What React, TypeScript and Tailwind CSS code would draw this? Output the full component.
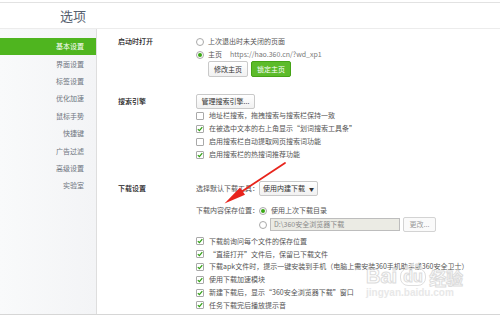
import React from "react";

const nav = ["基本设置", "界面设置", "标签设置", "优化加速", "鼠标手势", "快捷键", "广告过滤", "高级设置", "实验室"];

function Radio({ on }: { on?: boolean }) {
  return (
    <span className="w-[8px] h-[8px] rounded-full border border-[#a9a9a9] bg-white flex items-center justify-center shrink-0">
      {on && <span className="w-[4px] h-[4px] rounded-full bg-[#3aa815]" />}
    </span>
  );
}

function Check({ on }: { on?: boolean }) {
  return (
    <span className="w-[8px] h-[8px] rounded-[1px] border border-[#a9a9a9] bg-white flex items-center justify-center shrink-0">
      {on && (
        <svg width="6" height="6" viewBox="0 0 6 6">
          <path d="M0.8 3.1 L2.4 4.6 L5.3 1.2" stroke="#2f9e12" strokeWidth="1.2" fill="none" />
        </svg>
      )}
    </span>
  );
}

function CheckRow({ text, on = true, h = "h-[13px]" }: { text: string; on?: boolean; h?: string }) {
  return (
    <div className={`${h} flex items-center gap-[5px] whitespace-nowrap`}>
      <Check on={on} />
      <span>{text}</span>
    </div>
  );
}

function Btn({ children, w }: { children: React.ReactNode; w: string }) {
  return (
    <span className={`${w} h-full flex items-center justify-center whitespace-nowrap border border-[#c9c9c9] rounded-[2px] bg-gradient-to-b from-white to-[#f1f1f1] text-[#333]`}>
      {children}
    </span>
  );
}

export default function App() {
  return (
    <div
      className="w-[500px] h-[318px] bg-white relative overflow-hidden text-[7px] leading-none text-[#555]"
      style={{ fontFamily: '"Noto Sans CJK SC", "Noto Sans", sans-serif' }}
    >
      <div className="pt-[2px]">
        <div className="border-t border-[#e2e2e2] h-[27px] border-b border-b-[#ececec] flex items-center pl-[60px]">
          <span className="text-[13px] text-[#56606e]">选项</span>
        </div>
      </div>

      <div className="flex h-[286px] border-b border-[#d6d6d6]">
        {/* sidebar */}
        <div className="w-[97px] shrink-0 bg-gradient-to-r from-[#f9fafb] to-[#f3f4f6] border-r border-[#dedede] pt-[9px]">
          {nav.map((n, i) => (
            <div
              key={n}
              className={`h-[17.4px] flex items-center justify-end pr-[12px] ${
                i === 0 ? "bg-[#4fb51f] text-white" : "text-[#6e7580]"
              }`}
            >
              {n}
            </div>
          ))}
        </div>

        {/* content */}
        <div className="flex-1 pl-[21px]">
          {/* startup */}
          <div className="flex pt-[6px]">
            <div className="w-[78px] h-[13px] flex items-center text-[#222] font-medium">启动时打开</div>
            <div>
              <div className="h-[13px] flex items-center gap-[4px]">
                <Radio />
                <span>上次退出时未关闭的页面</span>
              </div>
              <div className="h-[13px] flex items-center gap-[4px]">
                <Radio on />
                <span>主页</span>
                <span className="ml-[4px] text-[#777]">https://hao.360.cn/?wd_xp1</span>
              </div>
              <div className="h-[16px] flex gap-[3px] pl-[12px]">
                <Btn w="w-[40px]">修改主页</Btn>
                <span className="w-[40px] h-full flex items-center justify-center border border-[#45a316] rounded-[2px] bg-[#5cbb2a] text-white">
                  锁定主页
                </span>
              </div>
            </div>
          </div>

          {/* search */}
          <div className="flex mt-[17px]">
            <div className="w-[78px] h-[15px] flex items-center text-[#222] font-medium">搜索引擎</div>
            <div>
              <div className="h-[15px] flex">
                <Btn w="w-[59px]">管理搜索引擎...</Btn>
              </div>
              <CheckRow text="地址栏搜索，拖拽搜索与搜索栏保持一致" on={false} />
              <CheckRow text="在被选中文本的右上角显示“划词搜索工具条”" />
              <CheckRow text="启用搜索栏自动提取网页搜索词功能" on={false} />
              <CheckRow text="启用搜索栏的热搜词推荐功能" />
            </div>
          </div>

          {/* download */}
          <div className="flex mt-[20px]">
            <div className="w-[78px] h-[15px] flex items-center text-[#222] font-medium">下载设置</div>
            <div>
              <div className="h-[15px] flex items-center whitespace-nowrap">
                <span className="w-[63px] shrink-0">选择默认下载工具：</span>
                <span className="w-[59px] h-full flex items-center justify-center gap-[4px] border border-[#c9c9c9] rounded-[2px] bg-gradient-to-b from-white to-[#f1f1f1] text-[#333]">
                  使用内建下载
                  <span className="text-[5px]">▼</span>
                </span>
              </div>
              <div className="h-[13px] mt-[8px] flex items-center whitespace-nowrap">
                <span className="w-[63px] shrink-0">下载内容保存位置：</span>
                <Radio on />
                <span className="ml-[4px]">使用上次下载目录</span>
              </div>
              <div className="h-[13px] mt-[1px] flex items-center whitespace-nowrap">
                <span className="w-[63px] shrink-0" />
                <Radio />
                <span className="ml-[3px] w-[130px] h-[13px] flex items-center pl-[3px] border border-[#bdbdbd] bg-[#ebebe4] text-[#8a8a8a]">
                  D:\360安全浏览器下载
                </span>
                <span className="ml-[3px] w-[33px] h-[15px] flex items-center justify-center border border-[#d3d3d3] rounded-[2px] bg-[#fafafa] text-[#9a9a9a]">
                  更改...
                </span>
              </div>
              <div className="mt-[4px]">
                <CheckRow h="h-[12.8px]" text="下载前询问每个文件的保存位置" />
                <CheckRow h="h-[12.8px]" text="“直接打开”文件后，保留已下载文件" />
                <CheckRow h="h-[12.8px]" text="下载apk文件时，提示一键安装到手机（电脑上需安装360手机助手或360安全卫士）" />
                <CheckRow h="h-[12.8px]" text="使用下载加速模块" />
                <CheckRow h="h-[12.8px]" text="新建下载后，显示“360安全浏览器下载”窗口" />
                <CheckRow h="h-[12.8px]" text="任务下载完后播放提示音" />
              </div>
            </div>
          </div>
        </div>
      </div>

      {/* red annotation arrow */}
      <svg className="absolute left-0 top-0 pointer-events-none" width="500" height="318">
        <line x1="285" y1="163" x2="238" y2="194" stroke="#e8241c" strokeWidth="1.8" strokeLinecap="round" />
        <polygon points="224.5,203.5 245,194.8 240,187.5" fill="#e8241c" />
      </svg>

      {/* watermark */}
      <div className="absolute left-[366px] top-[264px] pointer-events-none flex flex-col items-start opacity-90">
        <div className="flex items-end gap-[2px]">
          <span
            className="text-[20px] font-bold text-transparent"
            style={{ fontFamily: '"Liberation Sans", sans-serif', WebkitTextStroke: "1px #d9d9d9" }}
          >
            Bai
          </span>
          <span className="relative w-[28px] h-[22px] flex items-end justify-center">
            <svg className="absolute left-[4px] top-[-2px]" width="20" height="10">
              <circle cx="4" cy="6" r="2" fill="#e3e3e3" />
              <circle cx="9" cy="3" r="2" fill="#e3e3e3" />
              <circle cx="14" cy="3" r="2" fill="#e3e3e3" />
              <circle cx="18" cy="6" r="1.8" fill="#e3e3e3" />
            </svg>
            <span
              className="text-[16px] font-bold rounded-[8px] px-[2px] border-[1.5px] border-[#dcdcdc] text-transparent"
              style={{ fontFamily: '"Liberation Sans", sans-serif', WebkitTextStroke: "1px #d9d9d9" }}
            >
              du
            </span>
          </span>
          <span className="text-[17px] font-bold text-transparent" style={{ WebkitTextStroke: "1px #d9d9d9" }}>
            经验
          </span>
        </div>
        <span
          className="text-[10px] font-bold text-[#e6e6e6] mt-[2px]"
          style={{ fontFamily: '"Liberation Sans", sans-serif' }}
        >
          jingyan.baidu.com
        </span>
      </div>
    </div>
  );
}
